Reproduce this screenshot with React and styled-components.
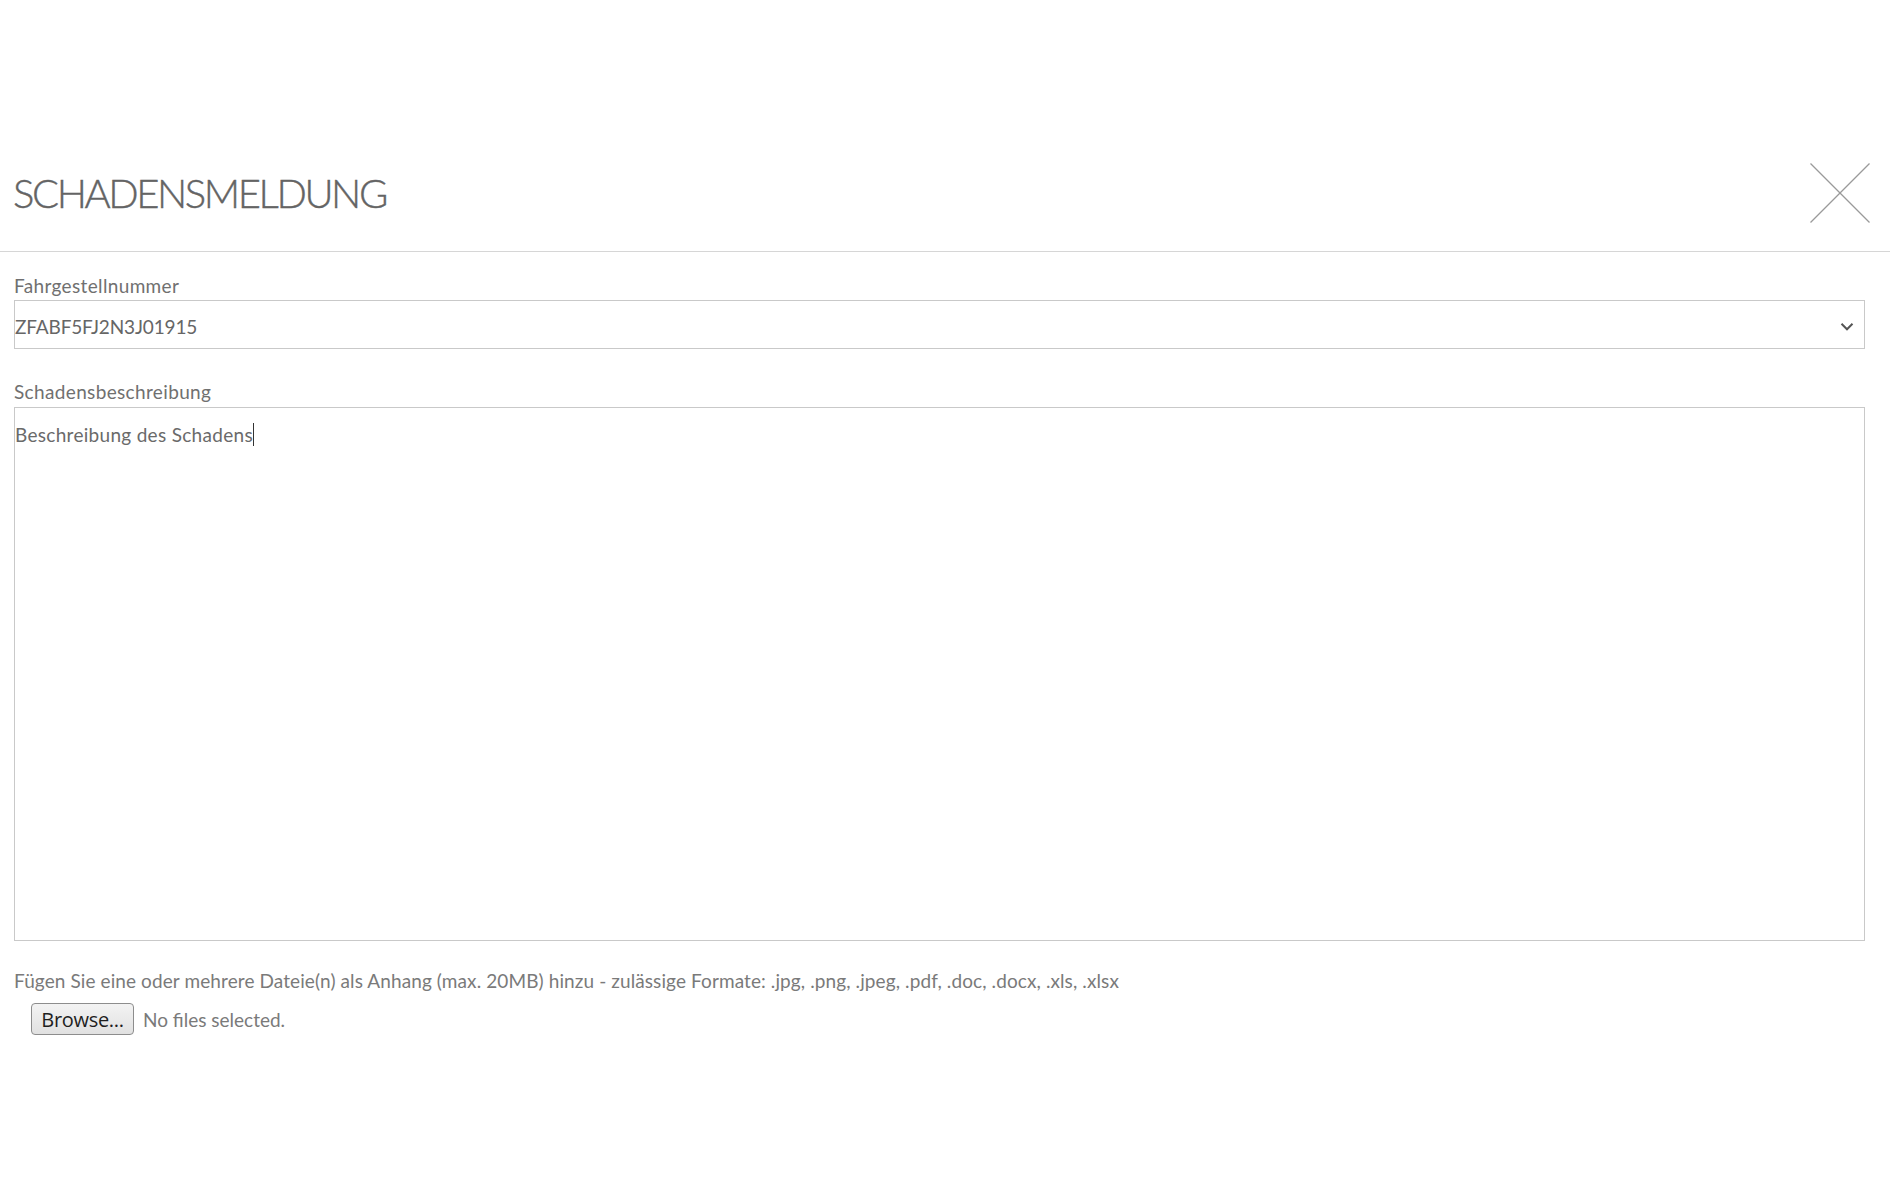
import React from "react";
import styled, { createGlobalStyle } from "styled-components";

const GlobalStyle = createGlobalStyle`
  html, body {
    margin: 0;
    padding: 0;
    background: #ffffff;
  }
  body {
    font-family: Lato, "Open Sans", "Liberation Sans", sans-serif;
    color: #6f6f6f;
  }
  * { box-sizing: border-box; }
`;

const Page = styled.div`
  width: 1890px;
  min-height: 1200px;
  padding-top: 135px;
  background: #fff;
`;

const Header = styled.header`
  display: flex;
  align-items: center;
  justify-content: space-between;
  height: 117px;
  padding: 0 20px 0 13px;
  border-bottom: 1px solid #d6d6d6;
`;

const Title = styled.h1`
  margin: 0;
  font-family: Lato, "Open Sans", sans-serif;
  font-weight: 300;
  font-size: 40px;
  line-height: 1;
  letter-spacing: -2.4px;
  color: #646464;
  -webkit-text-stroke: 0.4px #646464;
`;

const CloseButton = styled.button`
  width: 60px;
  height: 60px;
  padding: 0;
  border: none;
  background: transparent;
  cursor: pointer;
  display: flex;
`;

const Form = styled.form`
  display: flex;
  flex-direction: column;
  padding: 24px 25px 0 14px;
`;

const Field = styled.div`
  display: flex;
  flex-direction: column;
  margin-bottom: ${(p) => p.$gap || 0}px;
`;

const Label = styled.label`
  display: block;
  font-size: 19px;
  line-height: 20px;
  color: #707070;
  letter-spacing: 0.35px;
  margin-bottom: ${(p) => p.$mb || 4}px;
`;

const SelectBox = styled.div`
  position: relative;
  height: 49px;
  border: 1px solid #c9c9c9;
  display: flex;
  align-items: center;
`;

const Select = styled.select`
  appearance: none;
  -webkit-appearance: none;
  width: 100%;
  height: 100%;
  border: none;
  background: transparent;
  font-family: Lato, "Open Sans", sans-serif;
  font-size: 19px;
  color: #666;
  padding: 4px 40px 0 0;
  outline: none;
  letter-spacing: -0.15px;
`;

const Chevron = styled.svg`
  position: absolute;
  right: 10px;
  top: 50%;
  transform: translateY(-30%);
  pointer-events: none;
`;

const AreaWrap = styled.div`
  position: relative;
`;

const TextArea = styled.textarea`
  display: block;
  width: 100%;
  height: 534px;
  border: 1px solid #c9c9c9;
  resize: none;
  padding: 16px 0 0 0;
  font-family: Lato, "Open Sans", sans-serif;
  font-size: 19px;
  line-height: 22px;
  color: #6a6a6a;
  letter-spacing: 0.3px;
  outline: none;
  caret-color: #333;
`;

const CaretLayer = styled.div`
  position: absolute;
  top: 16px;
  left: 1px;
  font-family: Lato, "Open Sans", sans-serif;
  font-size: 19px;
  line-height: 22px;
  letter-spacing: 0.3px;
  pointer-events: none;
  white-space: pre;
  display: flex;
  align-items: center;
`;

const Ghost = styled.span`
  color: transparent;
`;

const Caret = styled.span`
  display: inline-block;
  width: 1.5px;
  height: 23px;
  background: #333;
`;

const Hint = styled.p`
  margin: 30px 0 0 0;
  font-size: 19px;
  line-height: 20px;
  color: #7a7a7a;
  letter-spacing: 0.1px;
`;

const FileRow = styled.div`
  display: flex;
  align-items: center;
  gap: 9px;
  margin: 12px 0 0 17px;
`;

const BrowseButton = styled.button`
  height: 32px;
  width: 103px;
  padding: 0;
  border: 1px solid #8d8d8d;
  border-radius: 4px;
  background: linear-gradient(#f3f3f3, #e1e1e1);
  font-family: "Open Sans", Lato, sans-serif;
  font-weight: 500;
  font-size: 20px;
  color: #1e1e1e;
  letter-spacing: -0.3px;
  cursor: pointer;
`;

const FileStatus = styled.span`
  font-size: 19px;
  color: #7a7a7a;
  letter-spacing: 0px;
`;

const DESCRIPTION = "Beschreibung des Schadens";

export default function App() {
  return (
    <>
      <GlobalStyle />
      <Page>
        <Header>
          <Title>SCHADENSMELDUNG</Title>
          <CloseButton aria-label="Schließen">
            <svg width="60" height="60" viewBox="0 0 60 60">
              <line x1="0.5" y1="0.5" x2="59.5" y2="59.5" stroke="#9a9a9a" strokeWidth="1.3" />
              <line x1="59.5" y1="0.5" x2="0.5" y2="59.5" stroke="#9a9a9a" strokeWidth="1.3" />
            </svg>
          </CloseButton>
        </Header>
        <Form onSubmit={(e) => e.preventDefault()}>
          <Field $gap={33}>
            <Label htmlFor="vin">Fahrgestellnummer</Label>
            <SelectBox>
              <Select id="vin" defaultValue="ZFABF5FJ2N3J01915">
                <option>ZFABF5FJ2N3J01915</option>
              </Select>
              <Chevron width="14" height="9" viewBox="0 0 14 9">
                <polyline points="1.5,1.5 7,7 12.5,1.5" fill="none" stroke="#555" strokeWidth="2" />
              </Chevron>
            </SelectBox>
          </Field>
          <Field>
            <Label htmlFor="desc" $mb={5}>Schadensbeschreibung</Label>
            <AreaWrap>
              <TextArea id="desc" defaultValue={DESCRIPTION} />
              <CaretLayer aria-hidden="true">
                <Ghost>{DESCRIPTION}</Ghost>
                <Caret />
              </CaretLayer>
            </AreaWrap>
          </Field>
          <Hint>
            Fügen Sie eine oder mehrere Dateie(n) als Anhang (max. 20MB) hinzu - zulässige Formate: .jpg, .png, .jpeg, .pdf, .doc, .docx, .xls, .xlsx
          </Hint>
          <FileRow>
            <BrowseButton type="button">Browse...</BrowseButton>
            <FileStatus>No files selected.</FileStatus>
          </FileRow>
        </Form>
      </Page>
    </>
  );
}
